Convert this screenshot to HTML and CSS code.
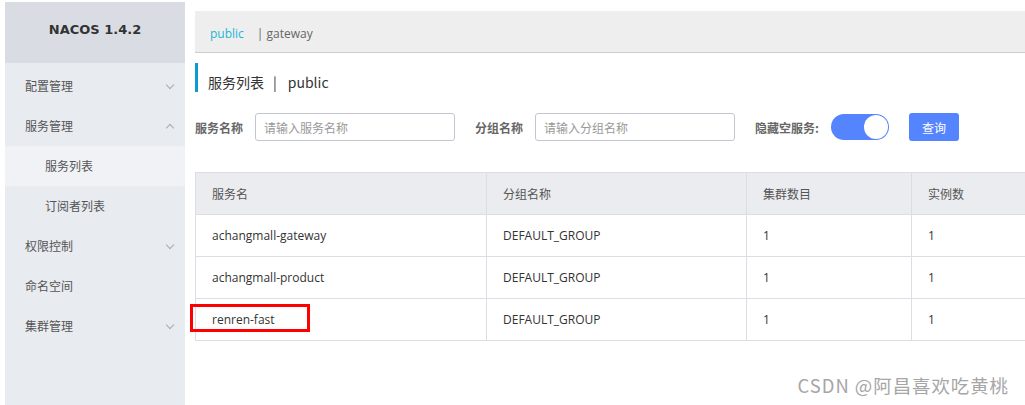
FILE: index.html
```html
<!DOCTYPE html>
<html lang="zh">
<head>
  <meta charset="UTF-8">
  <title>Nacos 服务列表</title>
  <link rel="stylesheet" href="styles.css">
</head>
<body>
  <div class="layout">
    <aside class="sidebar">
      <div class="brand">NACOS 1.4.2</div>
      <ul class="menu">
        <li class="menu-item">配置管理 <span class="arrow down"></span></li>
        <li class="menu-item">服务管理 <span class="arrow up"></span></li>
        <li class="menu-item sub active">服务列表</li>
        <li class="menu-item sub">订阅者列表</li>
        <li class="menu-item">权限控制 <span class="arrow down"></span></li>
        <li class="menu-item">命名空间</li>
        <li class="menu-item">集群管理 <span class="arrow down"></span></li>
      </ul>
    </aside>

    <main class="main">
      <div class="ns-bar">
        <span class="ns current">public</span>
        <span class="ns">| gateway</span>
      </div>

      <h2 class="page-title">服务列表<span class="sep">|</span>public</h2>

      <div class="filters">
        <label class="f-label">服务名称</label>
        <input class="f-input" placeholder="请输入服务名称">
        <label class="f-label">分组名称</label>
        <input class="f-input" placeholder="请输入分组名称">
        <label class="f-label">隐藏空服务:</label>
        <span class="switch"><span class="knob"></span></span>
        <button class="btn">查询</button>
      </div>

      <table class="grid">
        <thead>
          <tr><th class="c1">服务名</th><th class="c2">分组名称</th><th class="c3">集群数目</th><th class="c4">实例数</th></tr>
        </thead>
        <tbody>
          <tr><td>achangmall-gateway</td><td>DEFAULT_GROUP</td><td>1</td><td>1</td></tr>
          <tr><td>achangmall-product</td><td>DEFAULT_GROUP</td><td>1</td><td>1</td></tr>
          <tr><td><span class="mark">renren-fast</span></td><td>DEFAULT_GROUP</td><td>1</td><td>1</td></tr>
        </tbody>
      </table>

      <div class="watermark">CSDN @阿昌喜欢吃黄桃</div>
    </main>
  </div>
</body>
</html>
```

FILE: styles.css
```css
body {
  margin: 0;
  background: #fff;
  font-family: "Open Sans", "Noto Sans CJK SC", sans-serif;
  font-size: 12px;
  color: #333;
  overflow: hidden;
}

.layout {
  display: flex;
  height: 405px;
}

.sidebar {
  width: 180px;
  flex: none;
  margin: 2px 0 0 5px;
  background: #e8ebf0;
}

.brand {
  height: 61px;
  line-height: 56px;
  background: #d9dde3;
  text-align: center;
  font-family: "DejaVu Sans", sans-serif;
  font-weight: bold;
  font-size: 13px;
  color: #333;
}

.menu {
  list-style: none;
  margin: 3px 0 0;
  padding: 0;
}

.menu-item {
  height: 40px;
  line-height: 40px;
  padding-left: 20px;
  color: #555;
  position: relative;
  font-family: "Noto Sans CJK SC", sans-serif;
}

.menu-item.sub {
  padding-left: 40px;
}

.menu-item.active {
  background: #f1f2f5;
}

.arrow {
  position: absolute;
  right: 12px;
  top: 16px;
  width: 5px;
  height: 5px;
  border-right: 1px solid #aaa;
  border-bottom: 1px solid #aaa;
  transform: rotate(45deg);
}

.arrow.up {
  top: 19px;
  transform: rotate(-135deg);
}

.main {
  flex: 1;
  min-width: 0;
  padding: 11px 0 0 10px;
  position: relative;
  overflow: hidden;   /* Tabelle läuft rechts raus */
}

.ns-bar {
  background: #eee;
  border-bottom: 1px solid #ccc;
  display: flex;
  align-items: center;
  padding: 3px 0 0 15px;
  box-sizing: border-box;
  height: 42px;
  gap: 13px;
}

.ns {
  color: #666;
}

.ns.current {
  color: #1bb6d6;
}

.page-title {
  margin: 10px 0 0;
  height: 29px;
  box-sizing: border-box;
  padding: 9px 0 0 10px;
  border-left: 3px solid #0a9cd0;
  font-size: 14px;
  font-weight: normal;
  color: #333;
  font-family: "Noto Sans CJK SC", sans-serif;
  display: flex;
  align-items: center;
}

.sep {
  margin: 0 11px 0 9px;
}

.filters {
  margin-top: 21px;
  display: flex;
  align-items: center;
  height: 28px;
}

.f-label {
  font-weight: bold;
  color: #666;
  font-family: "Noto Sans CJK SC", sans-serif;
  margin-right: 12px;
}

.f-input {
  width: 200px;
  height: 28px;
  box-sizing: border-box;
  border: 1px solid #c4c6cf;
  border-radius: 3px;
  padding: 0 8px;
  font-family: "Noto Sans CJK SC", sans-serif;
  font-size: 12px;
  margin-right: 20px;
}

.f-input::placeholder {
  color: #999;
}

.switch {
  width: 58px;
  height: 26px;
  border-radius: 13px;
  background: #5584ff;
  position: relative;
  margin-right: 20px;
}

.knob {
  position: absolute;
  right: 1px;
  top: 1px;
  width: 24px;
  height: 24px;
  border-radius: 50%;
  background: #fff;
}

.btn {
  width: 50px;
  height: 28px;
  border: none;
  border-radius: 3px;
  background: #5584ff;
  color: #fff;
  font-family: "Noto Sans CJK SC", sans-serif;
  font-size: 12px;
}

.grid {
  margin-top: 31px;
  border-collapse: collapse;
  width: 882px;
  table-layout: fixed;
}

.grid th, .grid td {
  height: 41px;
  border: 1px solid #dcdee3;
  text-align: left;
  padding: 0 16px;
  color: #333;
  font-weight: normal;
}

.grid th {
  background: #ebecf0;
  font-family: "Noto Sans CJK SC", sans-serif;
  color: #555;
}

.c1 { width: 258px; }
.c2 { width: 227px; }
.c3 { width: 132px; }
.c4 { width: 133px; }

.mark {
  position: relative;
}

.mark::after {
  content: "";
  position: absolute;
  left: -22px;
  top: -7px;
  width: 114px;
  height: 22px;
  border: 3px solid #f00;
}

.watermark {
  position: absolute;
  right: 16px;
  bottom: 7px;
  font-family: "Noto Sans CJK SC", sans-serif;
  font-size: 18.4px;
  letter-spacing: 1px;
  color: #a6a6a6;
}
```
